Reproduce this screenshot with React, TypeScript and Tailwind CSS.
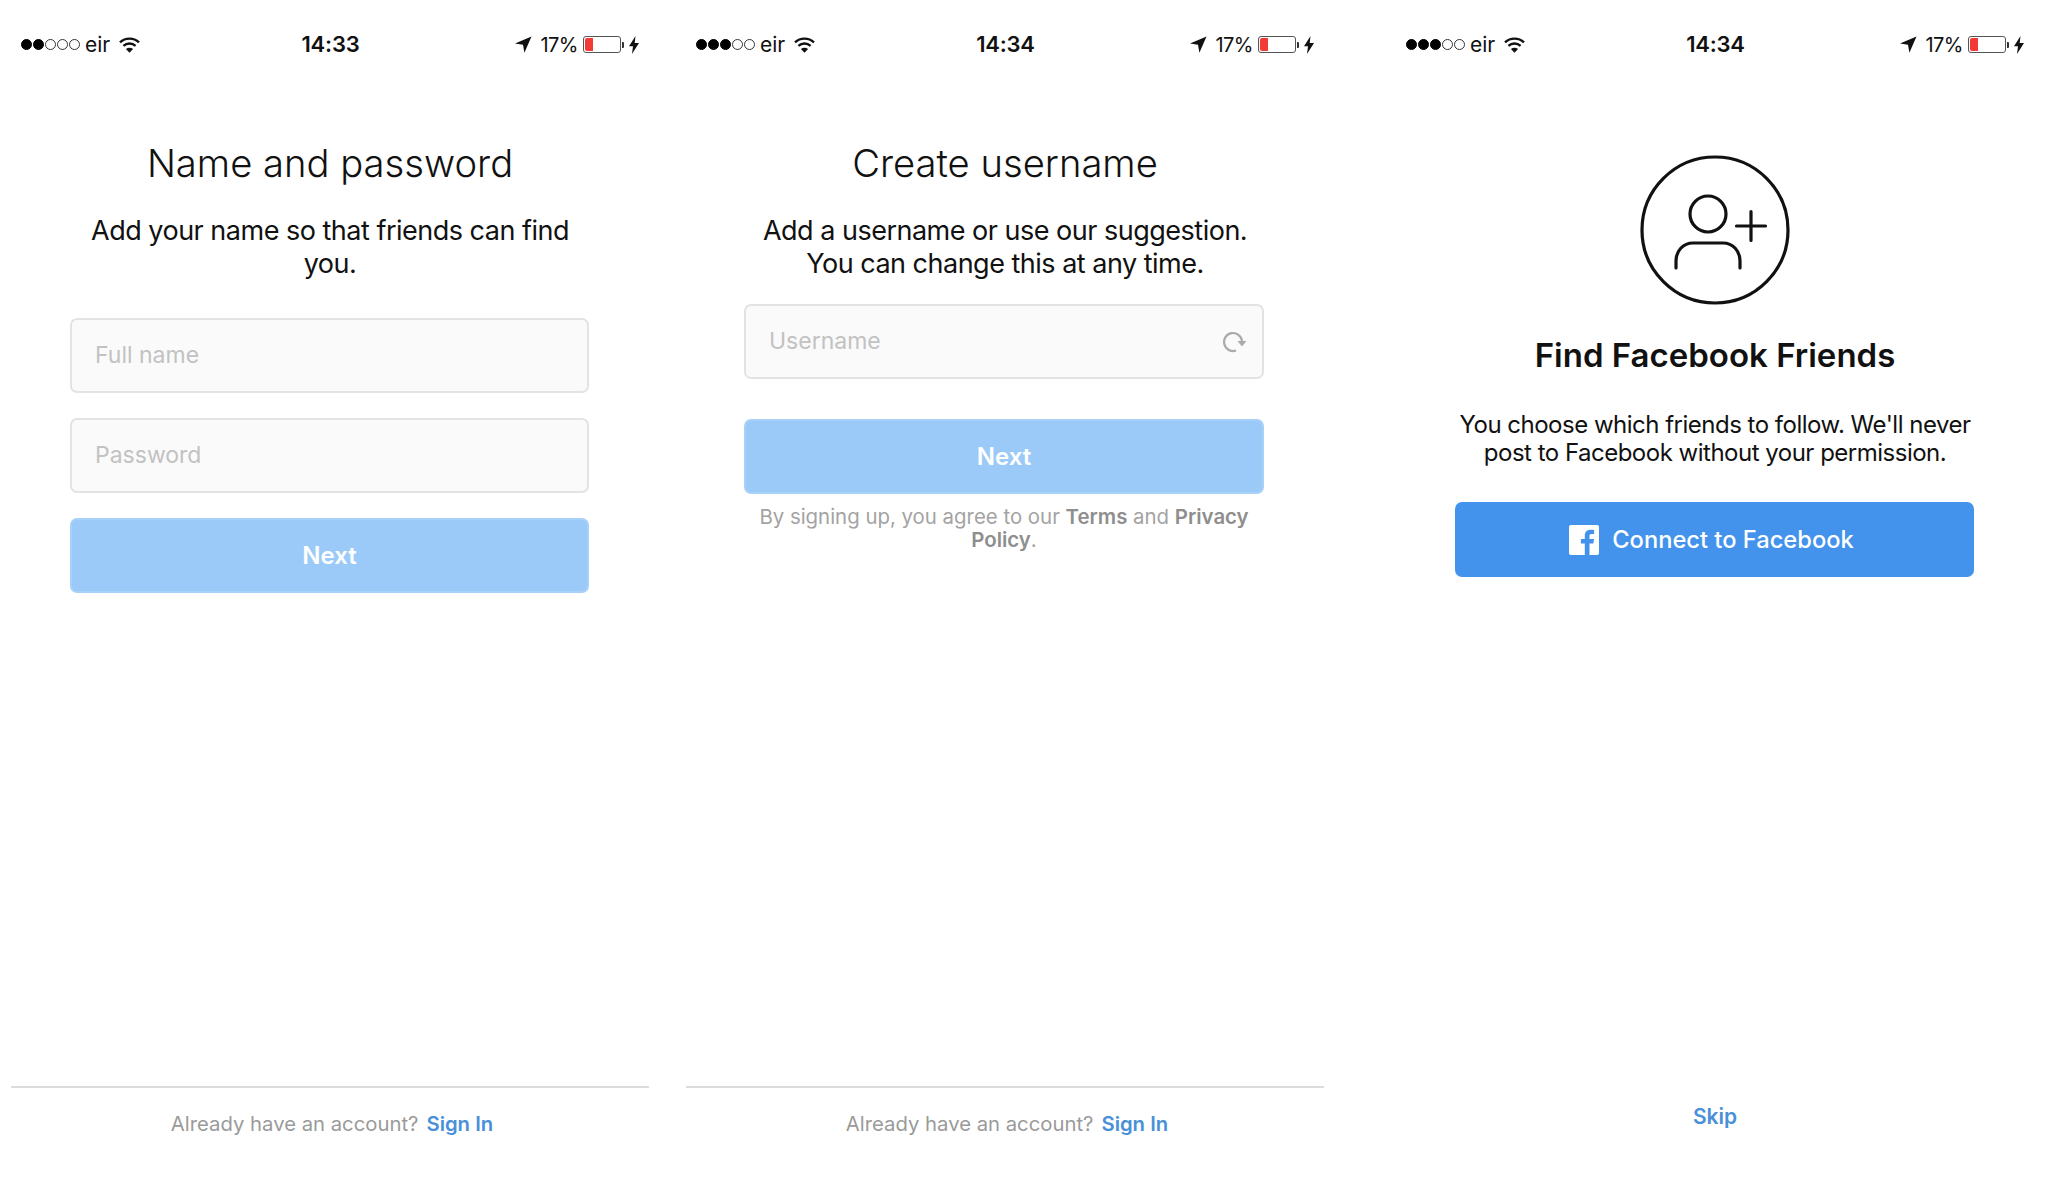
import type { ReactNode } from 'react'

function Signal({ filled }: { filled: number }) {
  return (
    <div className="flex items-center gap-[1px]">
      {[0, 1, 2, 3, 4].map((i) => (
        <span
          key={i}
          className={
            i < filled
              ? 'h-[11px] w-[11px] rounded-full border border-black bg-black'
              : 'h-[11px] w-[11px] rounded-full border border-[#333333] bg-white'
          }
        />
      ))}
    </div>
  )
}

function Wifi() {
  return (
    <svg width="21" height="16" viewBox="0 0 21 16" fill="none" stroke="#111111" strokeWidth="2.4">
      <path d="M1 5.4C6.4.4 14.600.4 20 5.4" />
      <path d="M4.400 8.800c3.500-3 8.700-3 12.200 0" />
      <path d="M10.500 15.800 6.900 12c2.100-1.600 5.100-1.600 7.200 0z" fill="#111111" stroke="none" />
    </svg>
  )
}

function StatusBar({ time, filled }: { time: string; filled: number }) {
  return (
    <div className="grid h-[88px] grid-cols-3 items-center px-[11px] pt-[1px] text-[#111111]">
      <div className="flex items-center">
        <Signal filled={filled} />
        <span className="ml-[5px] text-[21px]">eir</span>
        <span className="ml-[9px]">
          <Wifi />
        </span>
      </div>
      <div className="pl-[1px] text-center text-[22px] font-semibold tracking-[-0.2px]">{time}</div>
      <div className="flex items-center justify-end">
        <svg width="17" height="17" viewBox="0 0 17 17" fill="#111111">
          <path d="M16.500.5 0 7.600l8 1.200 1.400 7.900z" />
        </svg>
        <span className="ml-[8px] text-[20px] tracking-[-0.5px]">17%</span>
        <div className="ml-[5px] flex h-[17px] w-[38px] rounded-[3px] border border-[#555555] bg-white p-[1px]">
          <div className="w-[8px] rounded-l-[2px] bg-[#f23a36]" />
        </div>
        <div className="ml-[1px] h-[6px] w-[2px] rounded-r-[1px] bg-[#333333]" />
        <svg className="ml-[5px]" width="10" height="18" viewBox="0 0 10 18" fill="#111111">
          <path d="M6.500 0 0 10.200h4L3 18l7-11H5.700z" />
        </svg>
      </div>
    </div>
  )
}

function TextField({ placeholder, icon }: { placeholder: string; icon?: ReactNode }) {
  return (
    <div className="flex h-[75px] items-center justify-between rounded-[7px] border-2 border-[#e3e3e3] bg-[#fafafa] pl-[23px] pr-[16px]">
      <input
        placeholder={placeholder}
        className="w-full bg-transparent text-[23px] outline-none placeholder:text-[#c2c2c2]"
      />
      {icon}
    </div>
  )
}

function NextButton() {
  return (
    <button className="flex h-[75px] w-full items-center justify-center rounded-[7px] border-2 border-[#a8d1f9] bg-[#9bcaf8] text-[24px] font-semibold text-white">
      Next
    </button>
  )
}

function SignInFooter() {
  return (
    <div className="mx-[1px] flex h-[91px] flex-col border-t-2 border-[#dcdcdc]">
      <p className="mt-[21px] pl-[4px] text-center text-[20.3px] text-[#9a9a9a]">
        Already have an account?
        <span className="ml-[8px] font-semibold text-[#4a90d9]">Sign In</span>
      </p>
    </div>
  )
}

export default function App() {
  return (
    <main className="flex h-[1177px] overflow-hidden bg-white pl-[10px] font-[Inter,sans-serif] text-[#111111]">
      {/* name and password */}
      <section className="flex w-[640px] flex-col">
        <StatusBar time="14:33" filled={2} />
        <h1 className="mt-[50px] text-center text-[38.200px] font-light leading-[50px]">Name and password</h1>
        <p className="mt-[26px] text-center text-[27px] leading-[33px] tracking-[-0.5px]">
          Add your name so that friends can find
          <br />
          you.
        </p>
        <div className="ml-[60px] mr-[61px] mt-[38px] flex flex-col gap-[25px]">
          <TextField placeholder="Full name" />
          <TextField placeholder="Password" />
          <NextButton />
        </div>
        <div className="mt-auto">
          <SignInFooter />
        </div>
      </section>

      {/* create username */}
      <section className="ml-[35px] flex w-[640px] flex-col">
        <StatusBar time="14:34" filled={3} />
        <h1 className="mt-[50px] text-center text-[38.200px] font-light leading-[50px]">Create username</h1>
        <p className="mt-[26px] text-center text-[27px] leading-[33px] tracking-[-0.5px]">
          Add a username or use our suggestion.
          <br />
          You can change this at any time.
        </p>
        <div className="ml-[59px] mr-[61px] mt-[24px] flex flex-col gap-[40px]">
          <TextField
            placeholder="Username"
            icon={
              <svg className="shrink-0" width="24" height="24" viewBox="0 0 24 24" fill="none" stroke="#aaaaaa" strokeWidth="2.200">
                <path d="M14 20.500A9 9 0 1 1 20 11" />
                <path d="M15.500 11h9L20 16.500z" fill="#aaaaaa" stroke="none" />
              </svg>
            }
          />
          <NextButton />
        </div>
        <p className="ml-[59px] mr-[61px] mt-[11px] text-center text-[20.400px] leading-[23px] text-[#a3a3a3]">
          By signing up, you agree to our <span className="font-semibold text-[#8e8e8e]">Terms</span> and{' '}
          <span className="font-semibold text-[#8e8e8e]">Privacy</span>
          <br />
          <span className="font-semibold text-[#8e8e8e]">Policy</span>.
        </p>
        <div className="mt-auto">
          <SignInFooter />
        </div>
      </section>

      {/* find facebook friends */}
      <section className="ml-[70px] flex w-[640px] flex-col">
        <StatusBar time="14:34" filled={3} />
        <svg className="mx-auto mt-[67px]" width="150" height="150" viewBox="0 0 150 150" fill="none" stroke="#111111" strokeWidth="3.200" strokeLinecap="round">
          <circle cx="75" cy="75" r="73" />
          <circle cx="68" cy="59" r="18" />
          <path d="M36 113v-7c0-10 7-18 17-18h30c10 0 17 8 17 18v7" />
          <path d="M96.500 71h29M111 56.500v29" />
        </svg>
        <h1 className="mt-[29px] text-center text-[33px] font-semibold leading-[42px]">Find Facebook Friends</h1>
        <p className="mt-[35px] text-center text-[24px] leading-[28px] tracking-[-0.5px]">
          You choose which friends to follow. We'll never
          <br />
          post to Facebook without your permission.
        </p>
        <button className="ml-[60px] mr-[61px] mt-[35px] flex h-[75px] items-center justify-center rounded-[7px] bg-[#4393ec] pr-[6px] text-[23.700px] font-medium text-white">
          <svg className="mr-[13px]" width="30" height="30" viewBox="0 0 30 30">
            <path
              fill="#ffffff"
              d="M2 0h26a2 2 0 0 1 2 2v26a2 2 0 0 1-2 2h-7.500V18.500h3.900l.6-4.500h-4.500v-2.900c0-1.300.4-2.200 2.200-2.200h2.400v-4c-.4-.1-1.800-.2-3.500-.2-3.400 0-5.800 2.100-5.800 5.900V14h-3.900v4.500h3.900V30H2a2 2 0 0 1-2-2V2a2 2 0 0 1 2-2z"
            />
          </svg>
          Connect to Facebook
        </button>
        <div className="mt-auto pb-[45px] text-center text-[21px] font-semibold text-[#4a90d9]">Skip</div>
      </section>
    </main>
  )
}
